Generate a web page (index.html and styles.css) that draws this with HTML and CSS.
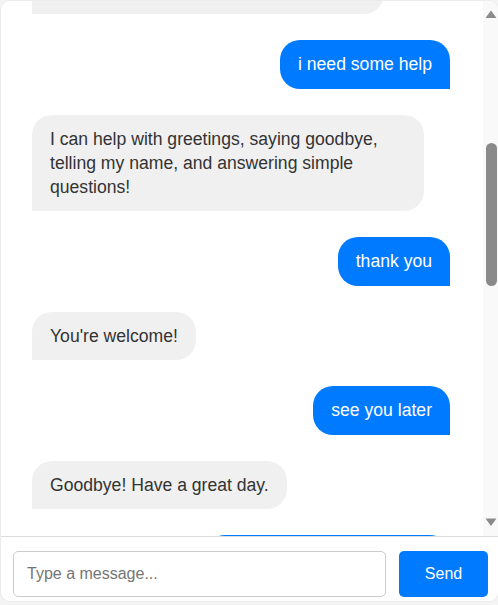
FILE: index.html
```html
<!DOCTYPE html>
<html lang="en">
<head>
<meta charset="utf-8">
<title>Chat</title>
<link rel="stylesheet" href="styles.css">
</head>
<body>
<div class="chat">
  <div class="viewport">
    <div class="messages" id="messages">
      <div class="msg user">hello</div>
      <div class="msg bot">Hi there! How can I help you today?</div>
      <div class="msg user">what is your name</div>
      <div class="msg bot">My name is ChatBot. I'm a simple assistant that can answer a few basic questions for you.</div>
      <div class="msg user">how are you</div>
      <div class="msg bot">I'm doing very well, thank you for asking!</div>
      <div class="msg user" id="anchor">i need some help</div>
      <div class="msg bot">I can help with greetings, saying goodbye, telling my name, and answering simple questions!</div>
      <div class="msg user">thank you</div>
      <div class="msg bot">You're welcome!</div>
      <div class="msg user">see you later</div>
      <div class="msg bot">Goodbye! Have a great day.</div>
      <div class="msg user">what is your favorite color?</div>
      <div class="msg bot">I don't have a favorite color, but I like blue!</div>
      <div class="msg user">bye</div>
      <div class="msg bot">Goodbye! Have a great day.</div>
    </div>
    <div class="scrollbar" aria-hidden="true">
      <svg class="sb-svg" width="15" height="535" viewBox="0 0 15 535">
        <rect x="0" y="0" width="15" height="535" fill="#f9f9f9"/>
        <polygon points="2.5,17 13.5,17 8,9.5" fill="#8a8a8a"/>
        <rect x="3" y="142" width="11" height="143" rx="5.5" ry="5.5" fill="#8a8a8a"/>
        <polygon points="2.5,517.5 13.5,517.5 8,525" fill="#8a8a8a"/>
      </svg>
    </div>
  </div>
  <form class="composer" onsubmit="return false;">
    <input class="field" type="text" placeholder="Type a message...">
    <button class="send" type="submit">Send</button>
  </form>
</div>
<script src="script.js"></script>
</body>
</html>
```
FILE: styles.css
```css
* { box-sizing: border-box; }
html, body { margin: 0; padding: 0; }
body {
  background: #f4f4f4;
  font-family: "Liberation Sans", Arial, sans-serif;
  font-size: 16px;
  color: #333;
  overflow: hidden;
}
.chat {
  width: 499px;
  height: 602px;
  background: #fff;
  border: 1px solid #ececec;
  border-radius: 10px;
  display: flex;
  flex-direction: column;
  overflow: hidden;
}
.viewport {
  flex: 1;
  min-height: 0;
  display: flex;
}
.messages {
  flex: 1;
  min-width: 0;
  overflow: hidden;
  display: flex;
  flex-direction: column;
  gap: 26px;
  padding: 20px 33px 20px 31px;
}
.scrollbar {
  width: 15px;
  flex-shrink: 0;
  background: #f9f9f9;
}
.sb-svg { display: block; }
.msg {
  max-width: 392px;
  padding: 12.25px 18px;
  font-size: 17.6px;
  line-height: 24px;
  border-radius: 20px;
  flex-shrink: 0;
}
.bot {
  align-self: flex-start;
  background: #f0f0f0;
  color: #333;
  border-bottom-left-radius: 0;
}
.user {
  align-self: flex-end;
  background: #007bff;
  color: #fff;
  border-bottom-right-radius: 0;
}
.composer {
  flex-shrink: 0;
  display: flex;
  gap: 13px;
  padding: 14px 10px 4px 12px;
  border-top: 1px solid #ddd;
  margin: 0;
}
.field {
  flex: 1;
  height: 46px;
  padding: 0 13px;
  border: 1px solid #ccc;
  border-radius: 5px;
  font-family: inherit;
  font-size: 16px;
  color: #333;
  outline: none;
}
.field::placeholder { color: #757575; }
.send {
  width: 89px;
  height: 46px;
  border: none;
  border-radius: 5px;
  background: #007bff;
  color: #fff;
  font-family: inherit;
  font-size: 16px;
}
```
FILE: script.js
```js
var box = document.getElementById('messages');
var anchor = document.getElementById('anchor');
box.scrollTop = anchor.offsetTop - box.offsetTop - 39;
```
